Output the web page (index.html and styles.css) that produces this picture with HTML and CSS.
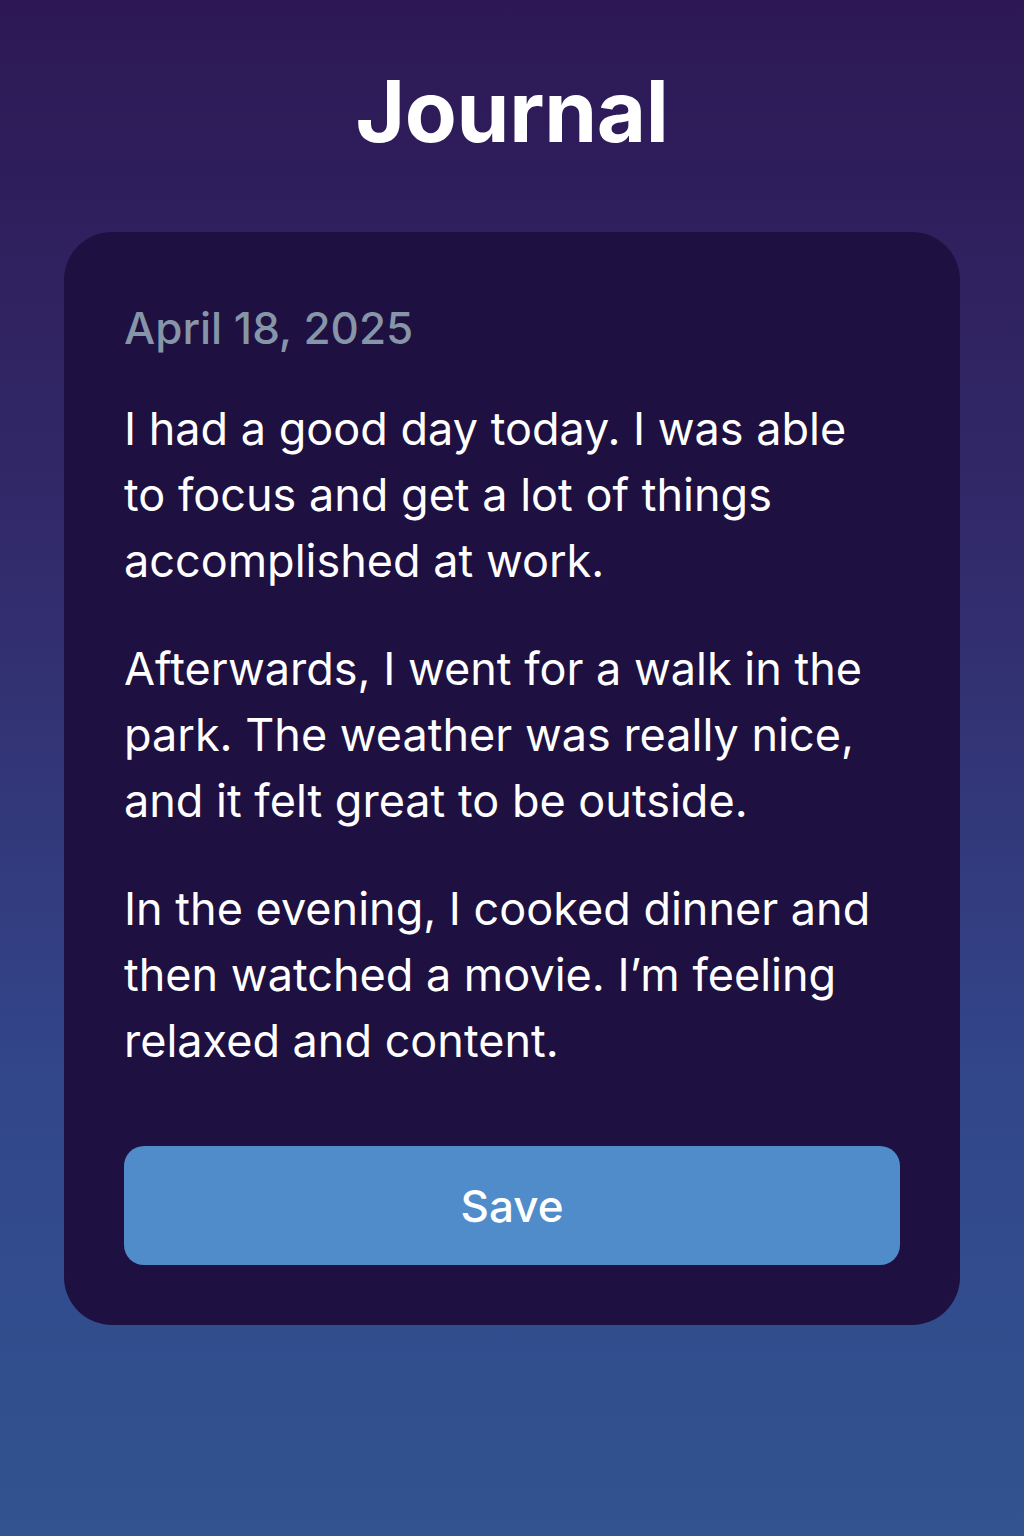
FILE: index.html
```html
<!DOCTYPE html>
<html lang="en">
<head>
<meta charset="utf-8">
<title>Journal</title>
<link rel="stylesheet" href="styles.css">
</head>
<body>
<main class="page">
  <h1 class="title">Journal</h1>
  <section class="card">
    <div class="date">April 18, 2025</div>
    <div class="entry">
      <p>I had a good day today. I was able to focus and get a lot of things accomplished at work.</p>
      <p>Afterwards, I went for a walk in the park. The weather was really nice, and it felt great to be outside.</p>
      <p>In the evening, I cooked dinner and then watched a movie. I’m feeling relaxed and content.</p>
    </div>
    <button class="save" type="button">Save</button>
  </section>
</main>
</body>
</html>
```

FILE: styles.css
```css
html, body {
  margin: 0;
  padding: 0;
}
body {
  width: 1024px;
  height: 1536px;
  background: linear-gradient(180deg, #2d1855 0%, #322a6a 35%, #32468a 70%, #31538f 100%);
  font-family: Inter, "Noto Sans", "Liberation Sans", sans-serif;
  color: #ffffff;
}
.page {
  display: flex;
  flex-direction: column;
  align-items: center;
  padding-top: 60px;
}
.title {
  margin: 0;
  font-size: 85px;
  font-weight: 700;
  line-height: 104px;
  letter-spacing: -0.3px;
  color: #ffffff;
}
.card {
  box-sizing: border-box;
  width: 896px;
  margin-top: 68px;
  padding: 70px 60px 60px;
  background: #1e1040;
  border-radius: 48px;
  display: flex;
  flex-direction: column;
}
.date {
  font-size: 44px;
  font-weight: 500;
  line-height: 52px;
  color: #8795a8;
}
.entry {
  margin-top: 42px;
  max-width: 760px;
}
.entry p {
  margin: 0 0 42px;
  font-size: 45px;
  line-height: 66px;
  font-weight: 400;
  color: #ffffff;
}
.entry p:last-child {
  margin-bottom: 0;
}
.save {
  margin-top: 72px;
  height: 119px;
  border: none;
  border-radius: 20px;
  background: #508bca;
  color: #ffffff;
  font-family: inherit;
  font-size: 44px;
  font-weight: 500;
  cursor: pointer;
}
```
